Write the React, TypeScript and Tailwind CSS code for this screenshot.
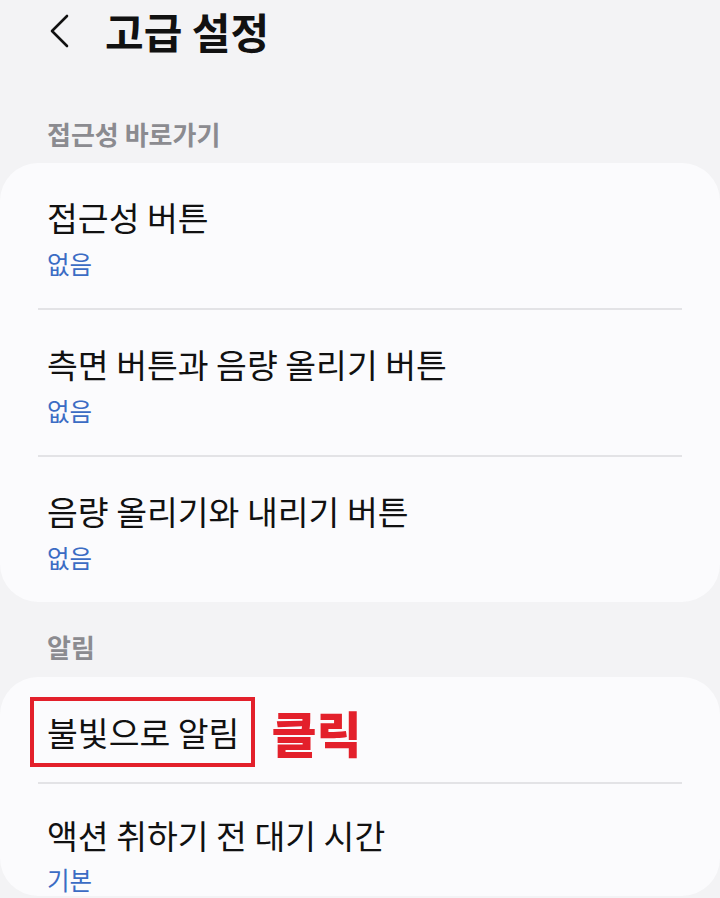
import React from "react";

const font = { fontFamily: '"Noto Sans CJK KR", "Noto Sans", sans-serif' };

function Item({ title, sub, divider }: { title: string; sub: string; divider?: boolean }) {
  return (
    <div className="px-[47px]">
      <div className="pt-[33px] pb-[28px]">
        <div className="text-[33.5px] leading-[42px] text-[#111111] whitespace-nowrap">{title}</div>
        <div className="mt-[10px] text-[24.5px] leading-[32px] text-[#3b6cc4]">{sub}</div>
      </div>
      {divider && <div className="-mx-[9px] h-[2px] bg-[#e3e3e6]" />}
    </div>
  );
}

export default function App() {
  return (
    <div className="w-[720px] h-[898px] overflow-hidden bg-[#f3f3f5]" style={font}>
      <div className="h-[62px] flex items-center pl-[48px]">
        <svg width="24" height="36" viewBox="0 0 24 36" className="shrink-0">
          <path d="M19 3 L4 18 L19 33" fill="none" stroke="#111" strokeWidth="2.6" strokeLinecap="round" strokeLinejoin="round" />
        </svg>
        <div className="ml-[33px] text-[42px] leading-[48px] font-bold text-[#111111] whitespace-nowrap">고급 설정</div>
      </div>

      <div className="pt-[58px] pb-[15px] pl-[47px] text-[26px] leading-[28px] font-semibold text-[#8b8b90]">접근성 바로가기</div>

      <div className="bg-[#fbfbfd] rounded-[38px]">
        <Item title="접근성 버튼" sub="없음" divider />
        <Item title="측면 버튼과 음량 올리기 버튼" sub="없음" divider />
        <Item title="음량 올리기와 내리기 버튼" sub="없음" />
      </div>

      <div className="pt-[31px] pb-[16px] pl-[47px] text-[26px] leading-[28px] font-semibold text-[#8b8b90]">알림</div>

      <div className="bg-[#fbfbfd] rounded-[38px]">
        <div className="px-[47px]">
          <div className="pt-[20px] pb-[15px] flex items-center">
            <div className="-ml-[17px] border-4 border-[#e3202b] pl-[13px] pr-[12px] py-[10px]">
              <div className="text-[33.5px] leading-[42px] text-[#111111] whitespace-nowrap">불빛으로 알림</div>
            </div>
            <div className="ml-[16px] text-[49px] leading-[50px] font-black text-[#e3202b]">클릭</div>
          </div>
          <div className="-mx-[9px] h-[2px] bg-[#e3e3e6]" />
        </div>
        <div className="px-[47px]">
          <div className="pt-[30px]">
            <div className="text-[33.5px] leading-[42px] text-[#111111] whitespace-nowrap">액션 취하기 전 대기 시간</div>
            <div className="mt-[8px] text-[24.5px] leading-[32px] text-[#3b6cc4]">기본</div>
          </div>
        </div>
      </div>
    </div>
  );
}
